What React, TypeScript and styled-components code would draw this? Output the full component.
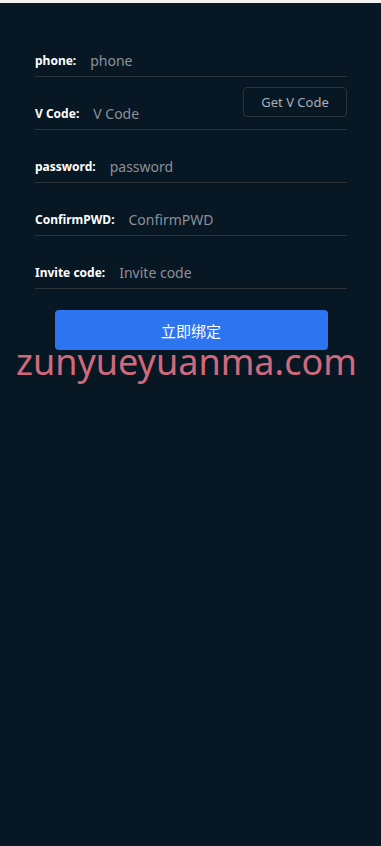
import styled, { createGlobalStyle } from 'styled-components';

const GlobalStyle = createGlobalStyle`
  html, body {
    margin: 0;
    padding: 0;
    background: #081724;
  }
  * {
    box-sizing: border-box;
  }
`;

const Page = styled.div`
  position: relative;
  min-height: 846px;
  background: #081724;
  border-top: 3px solid #f2f2f2;
  padding: 21px 34px 0 35px;
  font-family: 'Noto Sans', 'Open Sans', 'Noto Sans CJK SC', sans-serif;
`;

const Form = styled.form`
  display: flex;
  flex-direction: column;
`;

const Row = styled.div`
  display: flex;
  align-items: flex-end;
  height: 53px;
  padding-bottom: 4px;
  border-bottom: 1px solid #2e3539;
`;

const Label = styled.label`
  flex-shrink: 0;
  color: #ffffff;
  font-size: 12px;
  font-weight: 700;
  line-height: 22px;
  margin-right: 14px;
`;

const Input = styled.input`
  flex: 1;
  min-width: 0;
  background: transparent;
  border: none;
  outline: none;
  padding: 0;
  color: #ffffff;
  font-family: inherit;
  font-size: 14px;
  line-height: 22px;

  &::placeholder {
    color: #8b9197;
  }
`;

const CodeButton = styled.button`
  align-self: flex-start;
  margin-top: 10px;
  flex-shrink: 0;
  width: 104px;
  height: 30px;
  background: transparent;
  border: 1px solid #2b333c;
  border-radius: 4px;
  color: #a9afb5;
  font-family: inherit;
  font-size: 13px;
  cursor: pointer;
`;

const Submit = styled.button`
  align-self: center;
  width: 273px;
  height: 40px;
  margin-top: 21px;
  background: #2d74f0;
  border: none;
  border-radius: 4px;
  color: #ffffff;
  font-family: 'Noto Sans CJK SC', sans-serif;
  font-size: 15px;
  cursor: pointer;
`;

const Watermark = styled.div`
  position: absolute;
  left: 16px;
  top: 341px;
  color: #d2697b;
  font-family: 'Noto Sans', 'Open Sans', sans-serif;
  font-size: 36px;
  line-height: 36px;
  pointer-events: none;
  white-space: nowrap;
`;

type FieldT = {
  label: string;
  type?: string;
  withCode?: boolean;
};

const fields: FieldT[] = [
  { label: 'phone' },
  { label: 'V Code', withCode: true },
  { label: 'password', type: 'password' },
  { label: 'ConfirmPWD', type: 'password' },
  { label: 'Invite code' },
];

const App = () => {
  return (
    <>
      <GlobalStyle />
      <Page>
        <Form onSubmit={(e) => e.preventDefault()}>
          {fields.map((f) => (
            <Row key={f.label}>
              <Label>{f.label}:</Label>
              <Input type={f.type || 'text'} placeholder={f.label} />
              {f.withCode && <CodeButton type="button">Get V Code</CodeButton>}
            </Row>
          ))}
          <Submit type="submit">立即绑定</Submit>
        </Form>
        <Watermark>zunyueyuanma.com</Watermark>
      </Page>
    </>
  );
};

export default App;
